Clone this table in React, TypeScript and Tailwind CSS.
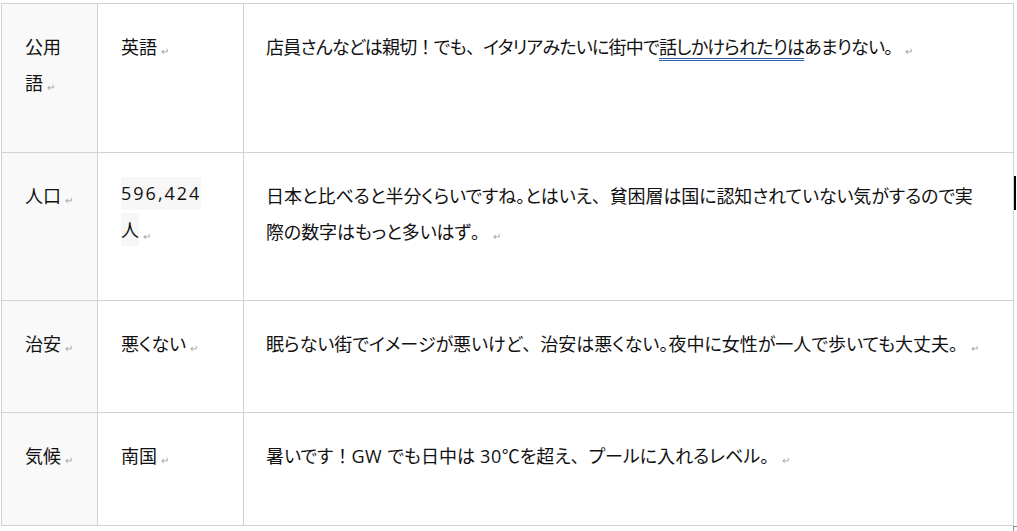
import React from "react";

function Mark() {
	return (
		<span className="ml-[4px] align-[-1px] text-[10px] text-[#a3a3a3]">↵</span>
	);
}

// full-width punctuation (no proportional squeeze)
function W({ children }: { children: React.ReactNode }) {
	return <span className="[font-feature-settings:normal]">{children}</span>;
}

function L({ children }: { children: React.ReactNode }) {
	return (
		<span className="font-['Open_Sans',sans-serif] tracking-[0.5px]">
			{children}
		</span>
	);
}

const rows: {
	label: React.ReactNode;
	value: React.ReactNode;
	note: React.ReactNode;
	h: string;
	track: string;
}[] = [
	{
		label: (
			<>
				公用
				<br />
				語<Mark />
			</>
		),
		value: (
			<>
				英語<Mark />
			</>
		),
		note: (
			<>
				店員さんなどは親切<W>！</W>でも<W>、</W>イタリアみたいに街中で
				<span className="underline decoration-double decoration-[#2f62b3] decoration-1 underline-offset-[4px]">
					話しかけられたりは
				</span>
				あまりない<W>。</W>
				<Mark />
			</>
		),
		h: "h-[149px]",
		track: "tracking-[-0.75px]",
	},
	{
		label: (
			<>
				人口<Mark />
			</>
		),
		value: (
			<>
				<span className="inline-block bg-[#f7f7f7] align-top font-['Open_Sans',sans-serif] leading-[33px] tracking-[2px]">
					596,424
				</span>
				<br />
				<span className="inline-block bg-[#f7f7f7] align-top leading-[33px]">人</span>
				<Mark />
			</>
		),
		note: (
			<>
				日本と比べると半分くらいですね。とはいえ<W>、</W>貧困層は国に認知されていない気がするので実
				<br />
				際の数字はもっと多いはず<W>。</W>
				<Mark />
			</>
		),
		h: "h-[148px]",
		track: "tracking-[-0.1px]",
	},
	{
		label: (
			<>
				治安<Mark />
			</>
		),
		value: (
			<>
				悪くない<Mark />
			</>
		),
		note: (
			<>
				眠らない街でイメージが悪いけど<W>、</W>治安は悪くない。夜中に女性が一人で歩いても大丈夫<W>。</W>
				<Mark />
			</>
		),
		h: "h-[112px]",
		track: "",
	},
	{
		label: (
			<>
				気候<Mark />
			</>
		),
		value: (
			<>
				南国<Mark />
			</>
		),
		note: (
			<>
				暑いです<W>！</W>
				<L>GW </L>でも日中は<L> 30</L>℃を超え<W>、</W>プールに入れるレベル<W>。</W>
				<Mark />
			</>
		),
		h: "h-[113px]",
		track: "",
	},
];

export default function App() {
	return (
		<div className="relative h-[531px] w-[1017px] overflow-hidden bg-white pl-[1px] pt-[3px] font-['Noto_Sans_CJK_JP',sans-serif] text-[18px] leading-[36px] text-[#111] [font-feature-settings:'palt']">
			<table className="w-[1012px] table-fixed border-collapse">
				<colgroup>
					<col className="w-[96px]" />
					<col className="w-[146px]" />
					<col className="w-[770px]" />
				</colgroup>
				<tbody>
					{rows.map((r, i) => (
						<tr className={r.h} key={i}>
							<td className="border border-[#d2d2d2] bg-[#f9f9f9] px-[23px] pt-[24px] align-top whitespace-nowrap">
								{r.label}
							</td>
							<td className="border border-[#d2d2d2] px-[23px] pt-[24px] align-top whitespace-nowrap">
								{r.value}
							</td>
							<td
								className={`border border-[#d2d2d2] px-[22px] pt-[24px] align-top whitespace-nowrap ${r.track}`}
							>
								{r.note}
							</td>
						</tr>
					))}
				</tbody>
			</table>
			<div className="absolute left-[1014px] top-[176px] h-[34px] w-[2px] bg-black" />
			<div className="absolute left-[1013px] top-[526px] h-[5px] w-[4px] border-l border-t border-[#8a8a8a]" />
		</div>
	);
}
